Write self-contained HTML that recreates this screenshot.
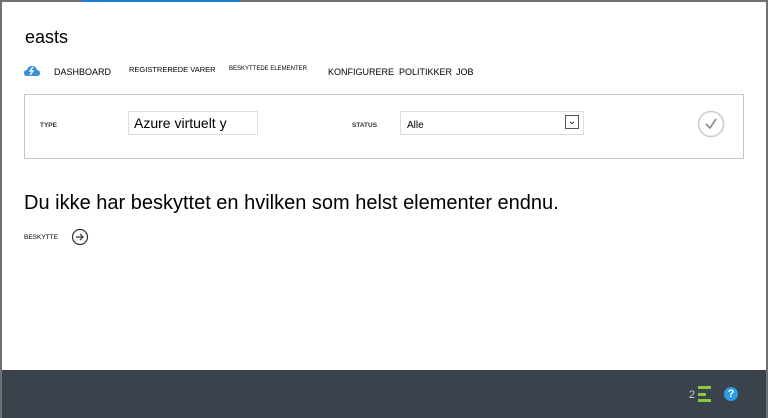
<!DOCTYPE html>
<html><head><style>
*{margin:0;padding:0;box-sizing:border-box}
body{width:768px;height:418px;overflow:hidden;background:#fff;font-family:"Liberation Sans",Arial,sans-serif;position:relative;color:#000}
.frame{position:absolute;left:0;top:0;width:768px;height:418px;border:2px solid #707070;border-bottom:none}
.blue{position:absolute;left:82px;top:0;width:158px;height:2px;background:#1e7ad3}
.abs{position:absolute;white-space:nowrap}
.foot{position:absolute;left:2px;right:2px;top:370px;height:48px;background:#3a424b}
</style></head><body>
<div class="frame"></div><div class="blue"></div>
<div class="abs" style="left:25px;top:27px;font-size:18px">easts</div>
<svg class="abs" style="left:24px;top:65px" width="16" height="12" viewBox="0 0 16 12"><path d="M3 11 Q0 11 0 8 Q0 5 3 5 Q4 1 8 1 Q12 1 13 5 Q16 5 16 8 Q16 11 13 11Z" fill="#3b8fd6"/><path d="M9 2 L6 6 L9 6 L6 10" stroke="#fff" stroke-width="1.3" fill="none"/></svg>
<div class="abs" style="left:54px;top:67px;font-size:9px">DASHBOARD</div>
<div class="abs" style="left:129px;top:65px;font-size:7.5px">REGISTREREDE VARER</div>
<div class="abs" style="left:229px;top:66px;font-size:6px">BESKYTTEDE ELEMENTER</div>
<div class="abs" style="left:328px;top:67px;font-size:9px">KONFIGURERE</div>
<div class="abs" style="left:399px;top:67px;font-size:9px">POLITIKKER</div>
<div class="abs" style="left:456px;top:67px;font-size:9px">JOB</div>
<div class="abs" style="left:24px;top:94px;width:720px;height:65px;border:1px solid #c8c8c8"></div>
<div class="abs" style="left:40px;top:122px;font-size:6.5px;font-weight:bold;color:#333">TYPE</div>
<div class="abs" style="left:128px;top:111px;width:130px;height:24px;border:1px solid #ddd;font-size:14px;padding:3px 0 0 5px">Azure virtuelt y</div>
<div class="abs" style="left:352px;top:122px;font-size:6.5px;font-weight:bold;color:#333">STATUS</div>
<div class="abs" style="left:400px;top:111px;width:184px;height:24px;border:1px solid #ddd;font-size:10px;padding:8px 0 0 6px">Alle</div>
<div class="abs" style="left:565px;top:115px;width:14px;height:14px;border:1px solid #555;font-size:10px;text-align:center;line-height:12px">&#8964;</div>
<svg class="abs" style="left:697px;top:110px" width="28" height="28"><circle cx="14" cy="14" r="12.5" fill="none" stroke="#ccc" stroke-width="1.5"/><path d="M9 14 L13 18 L19 9" stroke="#888" stroke-width="1.6" fill="none"/></svg>
<div class="abs" style="left:24px;top:192px;font-size:20px">Du ikke har beskyttet en hvilken som helst elementer endnu.</div>
<div class="abs" style="left:24px;top:234px;font-size:6.5px">BESKYTTE</div>
<svg class="abs" style="left:71px;top:228px" width="18" height="18"><circle cx="9" cy="9" r="7.5" fill="none" stroke="#333" stroke-width="1.2"/><path d="M5 9 H12 M9 6 L12 9 L9 12" stroke="#333" stroke-width="1.2" fill="none"/></svg>
<div class="foot"></div>
<div class="abs" style="left:689px;top:389px;font-size:11px;color:#ccc">2</div>
<div class="abs" style="left:698px;top:386px;width:13px;height:3px;background:#8dc63f"></div>
<div class="abs" style="left:698px;top:393px;width:8px;height:3px;background:#8dc63f"></div>
<div class="abs" style="left:698px;top:399px;width:13px;height:3px;background:#8dc63f"></div>
<div class="abs" style="left:724px;top:387px;width:14px;height:14px;border-radius:50%;background:#2d9be8;color:#fff;font-size:11px;font-weight:bold;text-align:center;line-height:14px">?</div>
</body></html>
